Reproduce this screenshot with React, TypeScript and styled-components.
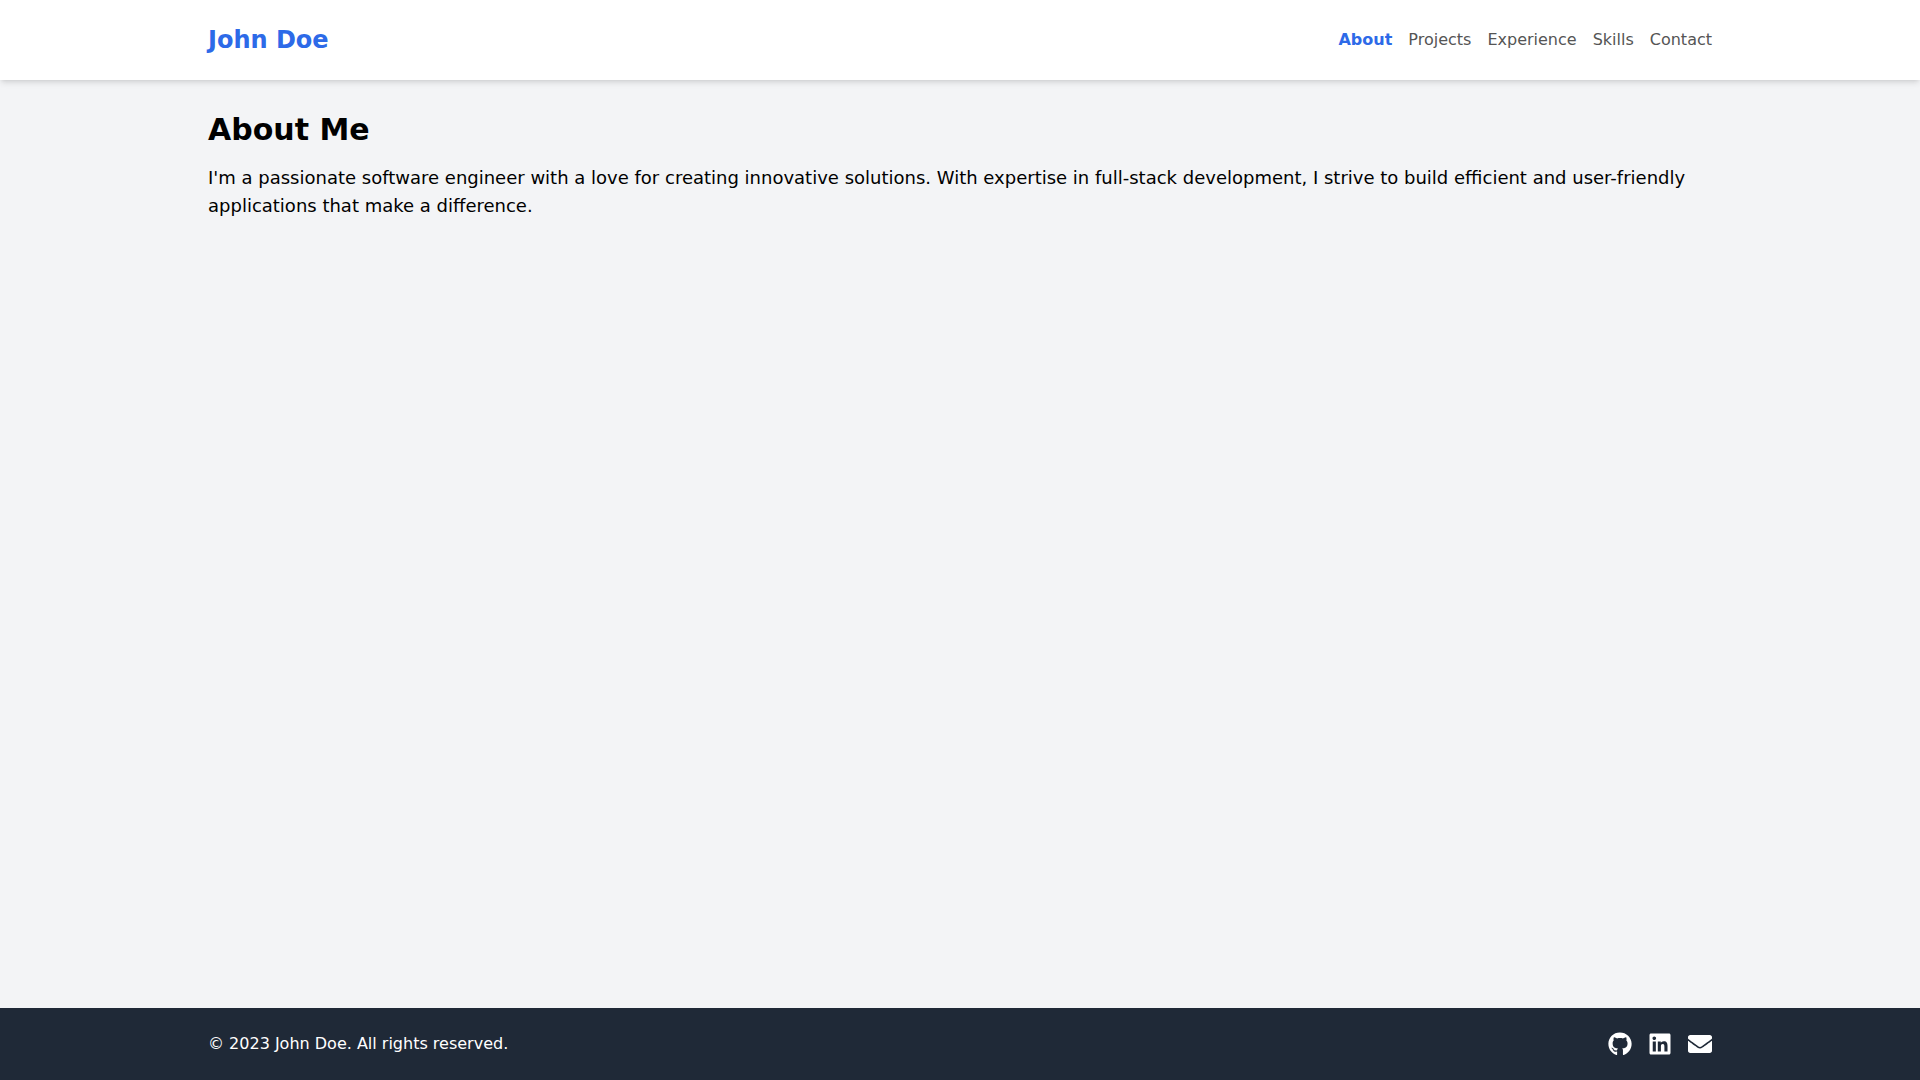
import React from "react";
import styled, { createGlobalStyle } from "styled-components";
import { FaGithub, FaLinkedin, FaEnvelope } from "react-icons/fa";

const Global = createGlobalStyle`
  html, body { margin: 0; padding: 0; }
  body { font-family: "DejaVu Sans", sans-serif; line-height: 1.5; }
  * { box-sizing: border-box; }
`;

const Page = styled.div`
  min-height: 100vh;
  display: flex;
  flex-direction: column;
  background: #f3f4f6;
`;
const Header = styled.header`
  background: #fff;
  box-shadow: 0 4px 6px -1px rgba(0,0,0,.1), 0 2px 4px -2px rgba(0,0,0,.1);
  position: relative;
`;
const Container = styled.div`
  width: 1536px;
  margin: 0 auto;
  padding: 0 16px;
`;
const HeaderRow = styled(Container)`
  display: flex;
  justify-content: space-between;
  align-items: center;
  padding-top: 24px;
  padding-bottom: 24px;
  height: 80px;
`;
const Logo = styled.div`
  font-size: 24px;
  line-height: 32px;
  font-weight: 700;
  color: #2d6ae8;
`;
const Nav = styled.nav`
  display: flex;
  gap: 16px;
`;
const NavLink = styled.a<{ $active?: boolean }>`
  font-size: 16px;
  line-height: 24px;
  color: ${(p) => (p.$active ? "#2d6ae8" : "#555555")};
  font-weight: ${(p) => (p.$active ? 700 : 400)};
`;
const Main = styled(Container)`
  flex: 1;
  padding-top: 32px;
  padding-bottom: 32px;
`;
const Title = styled.h1`
  margin: 0 0 16px;
  font-size: 30px;
  line-height: 36px;
  font-weight: 700;
  color: #000;
`;
const Body = styled.p`
  margin: 0;
  font-size: 18px;
  line-height: 28px;
  color: #000;
`;
const Footer = styled.footer`
  background: #1f2937;
  color: #fff;
`;
const FooterRow = styled(Container)`
  height: 72px;
  display: flex;
  justify-content: space-between;
  align-items: center;
`;
const Copy = styled.p`
  margin: 0;
  font-size: 16px;
`;
const Icons = styled.div`
  display: flex;
  gap: 16px;
  font-size: 24px;
  color: #fff;
  svg { display: block; }
`;

export default function App() {
  return (
    <Page>
      <Global />
      <Header>
        <HeaderRow>
          <Logo>John Doe</Logo>
          <Nav>
            <NavLink $active>About</NavLink>
            <NavLink>Projects</NavLink>
            <NavLink>Experience</NavLink>
            <NavLink>Skills</NavLink>
            <NavLink>Contact</NavLink>
          </Nav>
        </HeaderRow>
      </Header>
      <Main>
        <Title>About Me</Title>
        <Body>
          I'm a passionate software engineer with a love for creating innovative solutions. With expertise in full-stack development, I strive to build efficient and user-friendly applications that make a difference.
        </Body>
      </Main>
      <Footer>
        <FooterRow>
          <Copy>© 2023 John Doe. All rights reserved.</Copy>
          <Icons>
            <FaGithub />
            <FaLinkedin />
            <FaEnvelope />
          </Icons>
        </FooterRow>
      </Footer>
    </Page>
  );
}
